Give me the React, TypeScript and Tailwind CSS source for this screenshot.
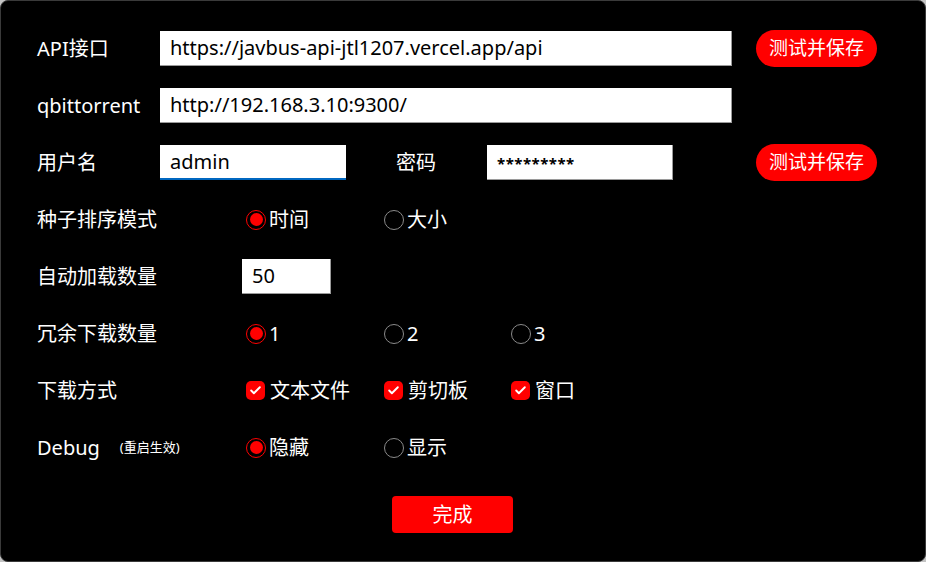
import { Check } from "lucide-react";

const font = "font-['Noto_Sans','Noto_Sans_CJK_SC',sans-serif]";

const Radio = ({ on, label, w }: { on?: boolean; label: string; w?: string }) => (
  <div className={`flex items-center ${w ?? ""}`}>
    {on ? (
      <span className="flex h-[20px] w-[20px] items-center justify-center rounded-full border-[1.5px] border-[#ff0000]">
        <span className="h-[13px] w-[13px] rounded-full bg-[#ff0000]" />
      </span>
    ) : (
      <span className="h-[20px] w-[20px] rounded-full border-[1.5px] border-[#8a8a8a]" />
    )}
    <span className="ml-[3px] text-[20px] leading-none">{label}</span>
  </div>
);

const CheckBox = ({ label, w }: { label: string; w?: string }) => (
  <div className={`flex items-center ${w ?? ""}`}>
    <span className="flex h-[19px] w-[19px] items-center justify-center rounded-[5px] bg-[#ff0000]">
      <Check size={13} strokeWidth={3.5} className="text-white" />
    </span>
    <span className="ml-[5px] text-[20px] leading-none">{label}</span>
  </div>
);

const Field = ({ value, w, focus }: { value: string; w: string; focus?: boolean }) => (
  <div
    className={`flex h-[35px] items-center bg-white px-[10px] text-[20px] text-black ${w} ${
      focus ? "border-b-2 border-[#0067c0]" : "border-b border-r border-[#9a9a9a]"
    }`}
  >
    {value}
  </div>
);

const RedPill = () => (
  <button className="ml-[24px] flex h-[37px] w-[121px] items-center justify-center rounded-full bg-[#ff0000] text-[19px] text-white">
    测试并保存
  </button>
);

const Row = ({ children }: { children: React.ReactNode }) => (
  <div className="flex h-[57px] items-center">{children}</div>
);

export default function App() {
  return (
    <div className="h-[562px] w-[926px] bg-[#c4c4c4]">
      <div className={`h-full rounded-[8px] border border-[#3a3a3a] bg-black pl-[36px] pt-[19px] text-white ${font}`}>
        <Row>
          <div className="w-[123px] text-[20px]">API接口</div>
          <Field value="https://javbus-api-jtl1207.vercel.app/api" w="w-[572px]" />
          <RedPill />
        </Row>
        <Row>
          <div className="w-[123px] text-[20px]">qbittorrent</div>
          <Field value="http://192.168.3.10:9300/" w="w-[572px]" />
        </Row>
        <Row>
          <div className="w-[123px] text-[20px]">用户名</div>
          <Field value="admin" w="w-[186px]" focus />
          <div className="ml-[50px] w-[91px] text-[20px]">密码</div>
          <div className="flex h-[35px] w-[186px] items-start border-b border-r border-[#9a9a9a] bg-white px-[10px] pt-[7px] text-[15px] font-bold tracking-[0.5px] text-black">
            *********
          </div>
          <div className="ml-[59px]">
            <RedPill />
          </div>
        </Row>
        <Row>
          <div className="w-[209px] text-[20px]">种子排序模式</div>
          <Radio on label="时间" w="w-[138px]" />
          <Radio label="大小" />
        </Row>
        <Row>
          <div className="w-[205px] text-[20px]">自动加载数量</div>
          <Field value="50" w="w-[89px]" />
        </Row>
        <Row>
          <div className="w-[209px] text-[20px]">冗余下载数量</div>
          <Radio on label="1" w="w-[138px]" />
          <Radio label="2" w="w-[127px]" />
          <Radio label="3" />
        </Row>
        <Row>
          <div className="w-[209px] text-[20px]">下载方式</div>
          <CheckBox label="文本文件" w="w-[138px]" />
          <CheckBox label="剪切板" w="w-[127px]" />
          <CheckBox label="窗口" />
        </Row>
        <Row>
          <div className="flex w-[209px] items-center">
            <span className="text-[20px]">Debug</span>
            <span className="ml-[20px] text-[13px]">(重启生效)</span>
          </div>
          <Radio on label="隐藏" w="w-[138px]" />
          <Radio label="显示" />
        </Row>
        <div className="mt-[20px] flex pl-[355px]">
          <button className="flex h-[37px] w-[121px] items-center justify-center rounded-[4px] bg-[#ff0000] text-[20px] text-white">
            完成
          </button>
        </div>
      </div>
    </div>
  );
}
